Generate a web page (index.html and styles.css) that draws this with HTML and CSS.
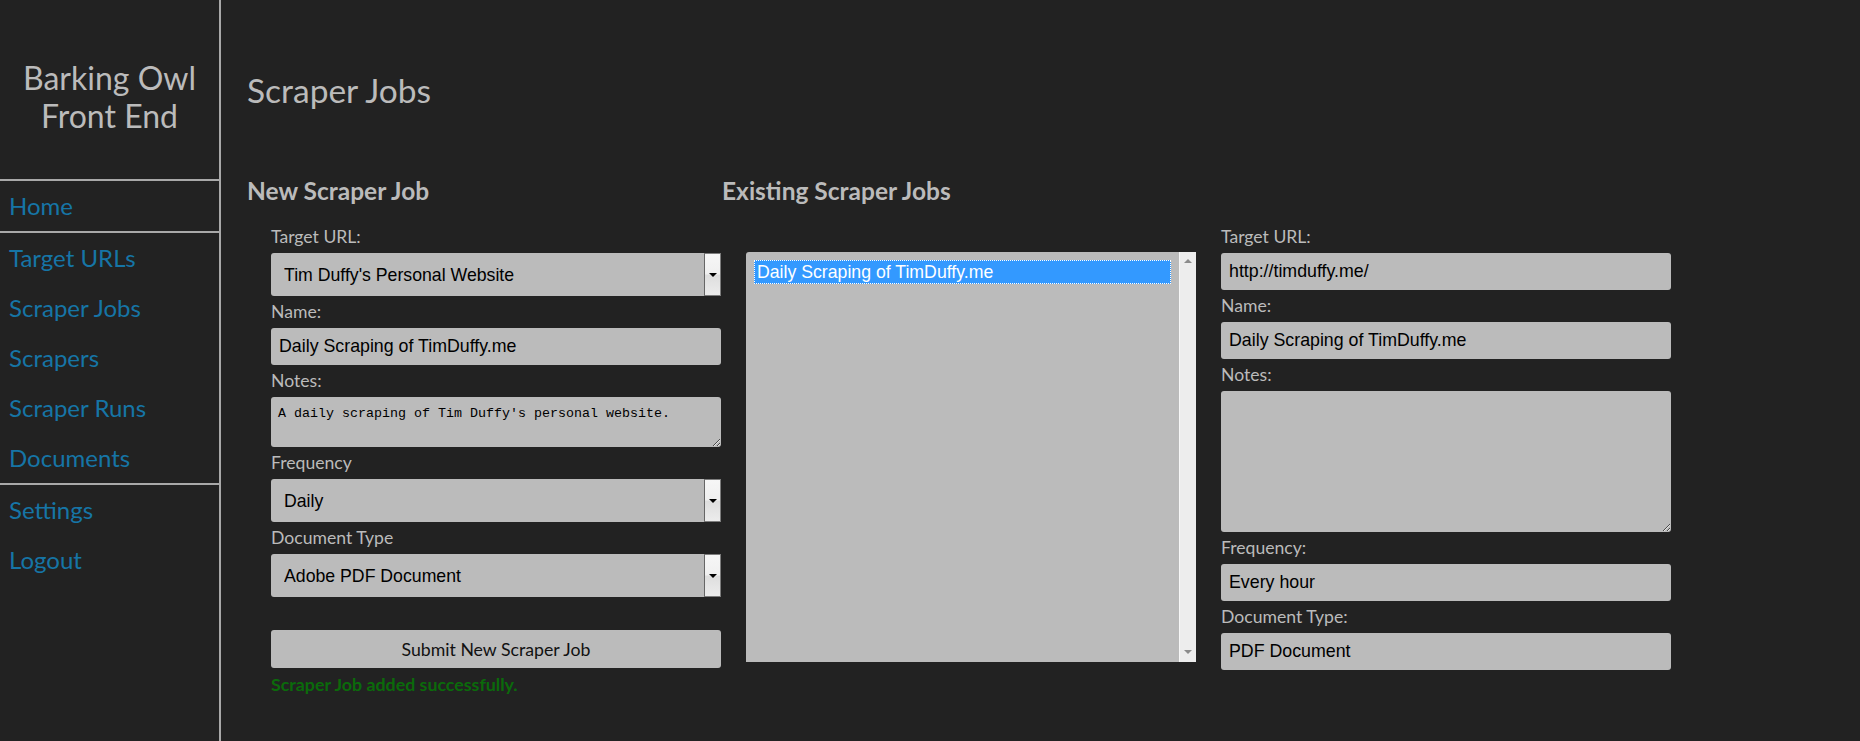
FILE: index.html
```html
<!DOCTYPE html>
<html lang="en">
<head>
<meta charset="utf-8">
<title>Scraper Jobs - Barking Owl Front End</title>
<link rel="stylesheet" href="styles.css">
</head>
<body>
<aside class="sidebar">
  <div class="brand">Barking Owl<br>Front End</div>
  <nav class="nav">
    <div class="nav-group">
      <a href="#">Home</a>
    </div>
    <div class="nav-group">
      <a href="#">Target URLs</a>
      <a href="#">Scraper Jobs</a>
      <a href="#">Scrapers</a>
      <a href="#">Scraper Runs</a>
      <a href="#">Documents</a>
    </div>
    <div class="nav-group last">
      <a href="#">Settings</a>
      <a href="#">Logout</a>
    </div>
  </nav>
</aside>
<main class="main">
  <h1 class="page-title">Scraper Jobs</h1>
  <div class="columns">
    <section class="new-job">
      <h3 class="section-title">New Scraper Job</h3>
      <form class="form">
        <label class="label">Target URL:</label>
        <div class="select-wrap">
          <select class="select"><option>Tim Duffy's Personal Website</option></select>
          <span class="select-btn"><span class="tri"></span></span>
        </div>
        <label class="label">Name:</label>
        <input class="input" type="text" value="Daily Scraping of TimDuffy.me">
        <label class="label">Notes:</label>
        <textarea class="textarea small">A daily scraping of Tim Duffy's personal website.</textarea>
        <label class="label">Frequency</label>
        <div class="select-wrap">
          <select class="select"><option>Daily</option></select>
          <span class="select-btn"><span class="tri"></span></span>
        </div>
        <label class="label">Document Type</label>
        <div class="select-wrap">
          <select class="select"><option>Adobe PDF Document</option></select>
          <span class="select-btn"><span class="tri"></span></span>
        </div>
        <button type="button" class="submit">Submit New Scraper Job</button>
        <div class="success">Scraper Job added successfully.</div>
      </form>
    </section>
    <section class="existing">
      <h3 class="section-title">Existing Scraper Jobs</h3>
      <div class="existing-row">
        <div class="listbox" role="listbox">
          <div class="options">
            <div class="option selected" role="option">Daily Scraping of TimDuffy.me</div>
          </div>
          <div class="scrollbar">
            <span class="arrow-up"></span>
            <span class="arrow-down"></span>
          </div>
        </div>
        <form class="form">
          <label class="label">Target URL:</label>
          <input class="input" type="text" value="http://timduffy.me/">
          <label class="label">Name:</label>
          <input class="input" type="text" value="Daily Scraping of TimDuffy.me">
          <label class="label">Notes:</label>
          <textarea class="textarea large"></textarea>
          <label class="label">Frequency:</label>
          <input class="input" type="text" value="Every hour">
          <label class="label">Document Type:</label>
          <input class="input" type="text" value="PDF Document">
        </form>
      </div>
    </section>
  </div>
</main>
</body>
</html>
```

FILE: styles.css
```css
* { box-sizing: border-box; }

html, body {
  margin: 0;
  padding: 0;
}

body {
  background: #222222;
  font-family: Lato, "Open Sans", sans-serif;
  color: #bbbbbb;
  display: flex;
  min-height: 100vh;
}

.sidebar {
  flex: none;
  width: 221px;
  border-right: 2px solid #a9a9a9;
}

.brand {
  padding: 59px 0 44px;
  text-align: center;
  font-size: 32px;
  line-height: 38px;
  color: #bbbbbb;
  border-bottom: 2px solid #a9a9a9;
}

.nav-group {
  border-bottom: 2px solid #a9a9a9;
}

.nav-group.last {
  border-bottom: none;
}

.nav a {
  display: block;
  height: 50px;
  line-height: 50px;
  padding-left: 9px;
  font-size: 24px;
  color: #1675a6;
  text-decoration: none;
}

.main {
  flex: 1;
  padding-left: 26px;
}

.page-title {
  margin: 70px 0 0;
  font-size: 33.5px;
  line-height: 40px;
  font-weight: normal;
  color: #bbbbbb;
}

.columns {
  display: flex;
  margin-top: 66px;
}

.section-title {
  margin: 0;
  font-size: 24.5px;
  line-height: 30px;
  font-weight: bold;
  color: #bbbbbb;
}

.new-job {
  width: 475px;
  flex: none;
}

.new-job .form {
  margin-top: 15px;
  padding-left: 24px;
}

.form {
  display: flow-root;
  width: 474px;
}

.existing-row .form {
  width: 450px;
}

.label {
  display: block;
  margin: 6px 0;
  font-size: 17.6px;
  line-height: 20px;
  color: #bbbbbb;
}

.input,
.select,
.textarea {
  display: block;
  width: 100%;
  border: none;
  background: #bbbbbb;
  color: #000;
  margin: 0;
  outline: none;
}

.input {
  height: 37px;
  padding: 0 8px;
  border-radius: 3px;
  font-family: "Liberation Sans", Arial, sans-serif;
  font-size: 17.8px;
}

.select-wrap {
  display: flex;
  width: 450px;
  height: 43px;
}

.select {
  flex: 1;
  height: 43px;
  padding: 0 0 0 13px;
  border-radius: 3px 0 0 3px;
  appearance: none;
  -webkit-appearance: none;
  font-family: "Liberation Sans", Arial, sans-serif;
  font-size: 17.7px;
}

.select-btn {
  flex: none;
  width: 17px;
  height: 43px;
  border: 1px solid #7d7d7d;
  border-left-color: #666;
  background: linear-gradient(#f6f6f6 0%, #f0f0f0 48%, #dedede 52%, #ececec 100%);
  display: flex;
  align-items: center;
  justify-content: center;
}

.tri {
  width: 0;
  height: 0;
  border-left: 4px solid transparent;
  border-right: 4px solid transparent;
  border-top: 4px solid #000;
}

.new-job .input,
.new-job .textarea {
  width: 450px;
}

.textarea {
  padding: 9px 7px 7px;
  border-radius: 3px;
  font-family: "Liberation Mono", "Courier New", monospace;
  font-size: 13.33px;
  line-height: 16px;
  resize: both;
}

.textarea.small { height: 50px; }
.textarea.large { height: 141px; }

.submit {
  display: block;
  width: 450px;
  height: 38px;
  margin-top: 33px;
  border: none;
  border-radius: 3px;
  background: #bbbbbb;
  color: #111;
  font-family: Lato, sans-serif;
  font-size: 17.7px;
}

.success {
  margin-top: 6px;
  font-size: 17.8px;
  line-height: 20px;
  font-weight: bold;
  color: #0b6a0b;
}

.existing {
  flex: none;
}

.existing-row {
  display: flex;
  gap: 25px;
  margin-top: 15px;
  padding-left: 24px;
}

.listbox {
  flex: none;
  display: flex;
  width: 450px;
  height: 410px;
  margin-top: 31px;
  background: #bbbbbb;
  border-radius: 3px 0 0 0;
}

.options {
  flex: 1;
  padding: 8px;
}

.option {
  height: 24px;
  line-height: 24px;
  padding-left: 3px;
  font-family: "Liberation Sans", Arial, sans-serif;
  font-size: 17.7px;
  color: #000;
}

.option.selected {
  background: #3399ff;
  color: #fff;
  outline: 1px dotted #fff;
  outline-offset: -1px;
}

.scrollbar {
  flex: none;
  width: 17px;
  background: #ededed;
  border-left: 1px solid #f7f7f7;
  display: flex;
  flex-direction: column;
  justify-content: space-between;
  align-items: center;
  padding: 7px 0 8px;
}

.arrow-up {
  width: 0;
  height: 0;
  border-left: 4px solid transparent;
  border-right: 4px solid transparent;
  border-bottom: 4px solid #8c8c8c;
}

.arrow-down {
  width: 0;
  height: 0;
  border-left: 4px solid transparent;
  border-right: 4px solid transparent;
  border-top: 4px solid #8c8c8c;
}
```
